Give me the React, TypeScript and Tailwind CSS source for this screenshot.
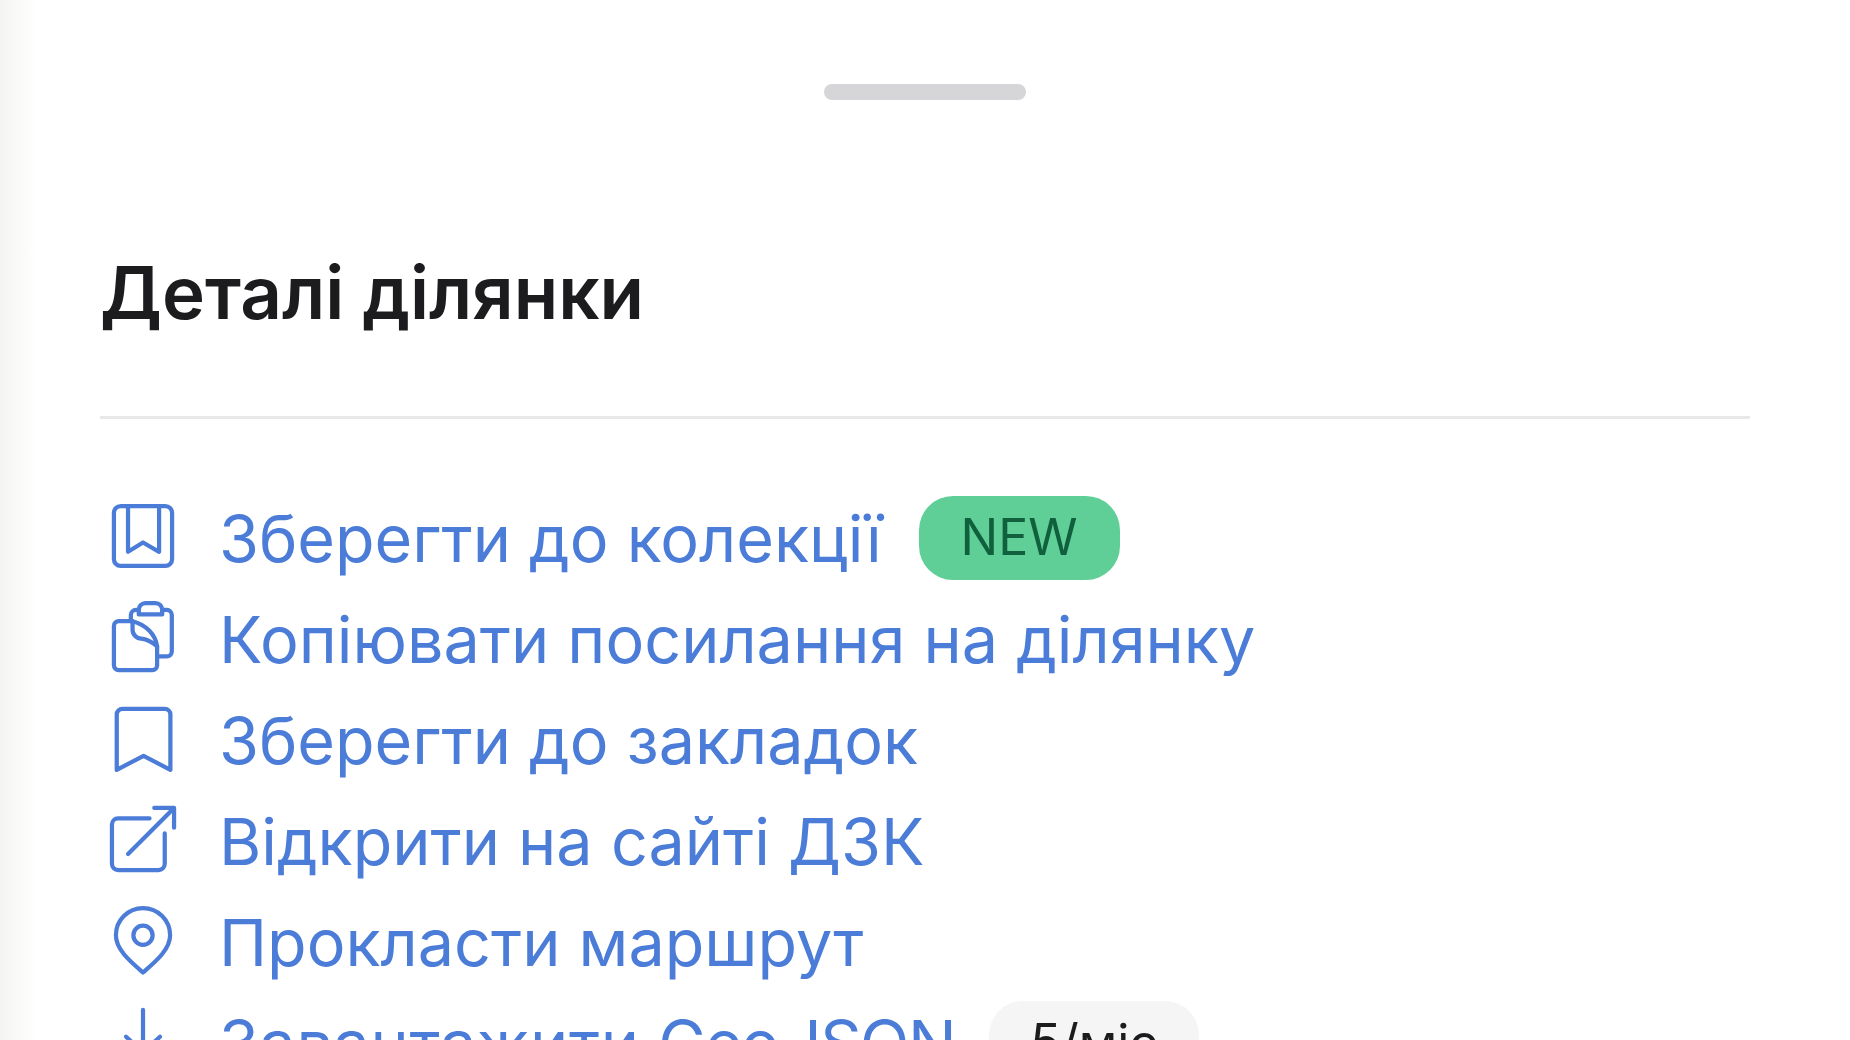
import React from "react";

const iconProps = {
  viewBox: "-0.75 -0.75 25.5 25.5",
  fill: "none",
  stroke: "currentColor",
  strokeWidth: 1.5,
  strokeLinecap: "round" as const,
  strokeLinejoin: "round" as const,
  className: "w-[72px] h-[72px] shrink-0 overflow-visible",
};

const IconCollection = () => (
  <svg {...iconProps}>
    <rect x="1.7" y="1.4" width="20.6" height="21.2" rx="2.4" />
    <path d="M6.7 1.4V17.6L12 14.3L17.7 17.6V1.4" />
  </svg>
);
const IconCopy = () => (
  <svg {...iconProps}>
    <path d="M8.3 6.4H3.4A1.7 1.7 0 0 0 1.7 8.1V22A1.7 1.7 0 0 0 3.4 23.7H15.3A1.7 1.7 0 0 0 17 22V15.3C16.4 11 13 7.6 8.3 6.4Z" />
    <path d="M8.3 6.4V9.4C8.3 11.2 9.8 12.6 11.4 12.6C13.4 12.8 15 13.6 17 15.3" />
    <path d="M7.7 6.4V4.2A1.8 1.8 0 0 1 9.5 2.4H10.5M18.8 2.4H20.4A1.8 1.8 0 0 1 22.2 4.2V17.1A1.8 1.8 0 0 1 20.4 18.9H17" />
    <path d="M10.5 4V2.4A2.4 2.4 0 0 1 12.9 0H16.4A2.4 2.4 0 0 1 18.8 2.4V4Z" />
  </svg>
);
const IconBookmark = () => (
  <svg {...iconProps}>
    <path d="M2.7 23.3V3.7A2 2 0 0 1 4.7 1.7H19.7A2 2 0 0 1 21.7 3.7V23.3L12.2 18.3Z" />
  </svg>
);
const IconExternal = () => (
  <svg {...iconProps}>
    <path d="M14.3 4.7H3.2A2.2 2.2 0 0 0 1 6.9V20.8A2.2 2.2 0 0 0 3.2 23H17.5A2.2 2.2 0 0 0 19.7 20.8V10" />
    <path d="M6.7 17.3L23 1M16 1H23V8" />
  </svg>
);
const IconPin = () => (
  <svg {...iconProps}>
    <path d="M12 23.5C8 20 2.4 15.6 2.4 10.3A9.6 9.6 0 0 1 21.6 10.3C21.6 15.6 16 20 12 23.5Z" />
    <circle cx="12" cy="10.3" r="3.4" />
  </svg>
);
const IconDownload = () => (
  <svg {...iconProps}>
    <path d="M12 1V16M6 10.5L12 16L18 10.5" />
    <path d="M2 16V20.5A2.5 2.5 0 0 0 4.5 23H19.5A2.5 2.5 0 0 0 22 20.5V16" />
  </svg>
);

function Row({ icon, label, badge }: { icon: React.ReactNode; label: React.ReactNode; badge?: React.ReactNode }) {
  return (
    <div className="flex items-center h-[101px] text-[#4b7cd8] shrink-0">
      <div className="w-[119px] pl-[7px] pb-[4px] shrink-0">{icon}</div>
      <span className="pt-[4px] text-[64.7px] leading-none whitespace-nowrap">{label}</span>
      {badge}
    </div>
  );
}

export default function App() {
  return (
    <div
      className="relative h-[1040px] w-full overflow-hidden bg-white px-[100px] text-[#1c1c1e]"
      style={{ fontFamily: "Inter, 'Noto Sans', sans-serif" }}
    >
      <div className="absolute inset-y-0 left-0 w-[36px] bg-gradient-to-r from-[#f4f4f2] to-white" />
      <div className="relative flex flex-col">
        <div className="flex justify-center pt-[84px]">
          <div className="h-[16px] w-[202px] rounded-full bg-[#d6d6d8]" />
        </div>
        <h1 className="mt-[148px] text-[72.7px] leading-[90px] font-semibold whitespace-nowrap">Деталі ділянки</h1>
        <div className="mt-[78px] h-[3px] bg-[#e8e8ea]" />
        <div className="mt-[68px] flex flex-col">
          <Row
            icon={<IconCollection />}
            label="Зберегти до колекції"
            badge={
              <span className="ml-[37px] flex h-[84px] w-[201px] items-center justify-center rounded-[34px] bg-[#5fcf97] text-[50px] text-[#11603d]">
                NEW
              </span>
            }
          />
          <Row icon={<IconCopy />} label="Копіювати посилання на ділянку" />
          <Row icon={<IconBookmark />} label="Зберегти до закладок" />
          <Row icon={<IconExternal />} label="Відкрити на сайті ДЗК" />
          <Row icon={<IconPin />} label="Прокласти маршрут" />
          <Row
            icon={<IconDownload />}
            label={
              <>
                <span className="tracking-[0.6px]">Завантажити </span>
                <span className="tracking-[-1.6px] [word-spacing:-10px]">Geo JSON</span>
              </>
            }
            badge={
              <span className="ml-[34px] flex h-[84px] w-[210px] items-center justify-center rounded-[34px] bg-[#f5f5f5] text-[50px] text-[#1c1c1e]">
                5/міс
              </span>
            }
          />
        </div>
      </div>
    </div>
  );
}
